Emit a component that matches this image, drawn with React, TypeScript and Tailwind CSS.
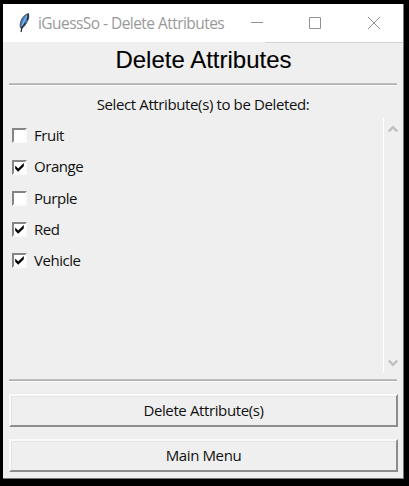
const attributes = [
  { name: 'Fruit', checked: false, row: 'h-[31px]' },
  { name: 'Orange', checked: true, row: 'h-[32px]' },
  { name: 'Purple', checked: false, row: 'h-[31px]' },
  { name: 'Red', checked: true, row: 'h-[31px]' },
  { name: 'Vehicle', checked: true, row: 'h-[31px]' },
];

function Feather() {
  return (
    <svg width="14" height="22" viewBox="0 0 14 22" className="shrink-0">
      <path d="M11.5 1.5C8 2.5 5 5.5 4 9C3 12 2.6 14.5 4.2 16.5L6 15.5C9 12.5 11 9 11.8 5Z" fill="#4480c2" stroke="#4a4f58" strokeWidth="1" />
      <path d="M10 3.5L7 9L5 14" fill="none" stroke="#8db8e4" strokeWidth="1.2" />
      <path d="M11.3 2L10.4 8M8.4 11L5 15.5L4 20" fill="none" stroke="#20242b" strokeWidth="1.2" />
    </svg>
  );
}

function Separator() {
  return <div className="h-[3px] w-[388px] shrink-0 border-t border-b border-t-[#c0c0c0] border-b-[#f9f9f9] bg-[#b0b0b0]" />;
}

function Checkbox({ checked }: { checked: boolean }) {
  return (
    <span className="flex size-[15px] shrink-0 items-center justify-center border-2 border-t-[#858585] border-r-[#fafafa] border-b-[#fafafa] border-l-[#858585] bg-white">
      {checked && (
        <svg width="11" height="11" viewBox="0 0 11 11" className="shrink-0">
          <path d="M1.2 3.6V6.8L4.2 9.8L9.8 4.2V1L4.2 6.5Z" fill="black" />
        </svg>
      )}
    </span>
  );
}

function Arrow({ down = false }: { down?: boolean }) {
  return (
    <svg width="10" height="8" viewBox="0 0 10 8" className={down ? 'rotate-180' : ''}>
      <path d="M0.8 6.5L5 2.2L9.2 6.5" fill="none" stroke="#c0c0c0" strokeWidth="2.4" />
    </svg>
  );
}

function TkButton({ label }: { label: string }) {
  return (
    <button className="flex h-[33px] w-[389px] shrink-0 items-center justify-center border-2 border-t-[#fafafa] border-r-[#8d8d8d] border-b-[#8d8d8d] border-l-[#fafafa] bg-[#efefef] pb-[2px] shadow-[inset_1px_1px_#e4e4e4]">
      <span className="tracking-[-0.38px]">{label}</span>
    </button>
  );
}

export default function App() {
  return (
    <div className="h-[486px] w-[409px] bg-black pt-[4px] pl-[3px] font-['Open_Sans','Noto_Sans',sans-serif] text-[15px] leading-5 text-[#111]">
      <div className="flex h-[475px] w-[401px] flex-col border-r border-b border-[#777] bg-[#efefef]">
        <header className="flex h-[38px] shrink-0 items-center bg-white pl-[14px] text-[#999]">
          <Feather />
          <span className="ml-[7px] w-[200px] whitespace-nowrap text-[15.5px] tracking-[-0.55px]">iGuessSo - Delete Attributes</span>
          <svg width="145" height="16" viewBox="0 0 145 16" className="ml-[13px] shrink-0" fill="none" stroke="#929292">
            <path d="M0 7.5H12M58.5 2.5H69.5V13.5H58.5ZM117 2L129 14M129 2L117 14" />
          </svg>
        </header>
        <div className="ml-auto h-px w-[138px] shrink-0 bg-[#d2d2d2]" />
        <main className="flex min-h-0 grow flex-col pl-[6px]">
          <h1 className="h-[40px] w-[389px] shrink-0 pt-[3px] text-center font-['Liberation_Sans',Arial,sans-serif] text-[24px] leading-[28px] text-black [-webkit-text-stroke:0.1px_black]">Delete Attributes</h1>
          <Separator />
          <p className="mt-[8px] h-[24px] w-[388px] shrink-0 text-center whitespace-nowrap tracking-[-0.38px]">Select Attribute(s) to be Deleted:</p>
          <section className="flex h-[255px] w-[393px] shrink-0">
            <div className="w-[374px] pt-[2px] pl-[3px]">
              {attributes.map((attribute) => (
                <label key={attribute.name} className={`flex items-center ${attribute.row}`}>
                  <Checkbox checked={attribute.checked} />
                  <span className="ml-[7px] pb-[2px] tracking-[-0.45px]">{attribute.name}</span>
                </label>
              ))}
            </div>
            <div className="flex w-[19px] flex-col items-center justify-between border-l border-white pt-[7px] pb-[6px]">
              <Arrow />
              <Arrow down />
            </div>
          </section>
          <div className="mt-[6px]"><Separator /></div>
          <div className="mt-[12px] flex flex-col gap-[12px]">
            <TkButton label="Delete Attribute(s)" />
            <TkButton label="Main Menu" />
          </div>
        </main>
      </div>
    </div>
  );
}
